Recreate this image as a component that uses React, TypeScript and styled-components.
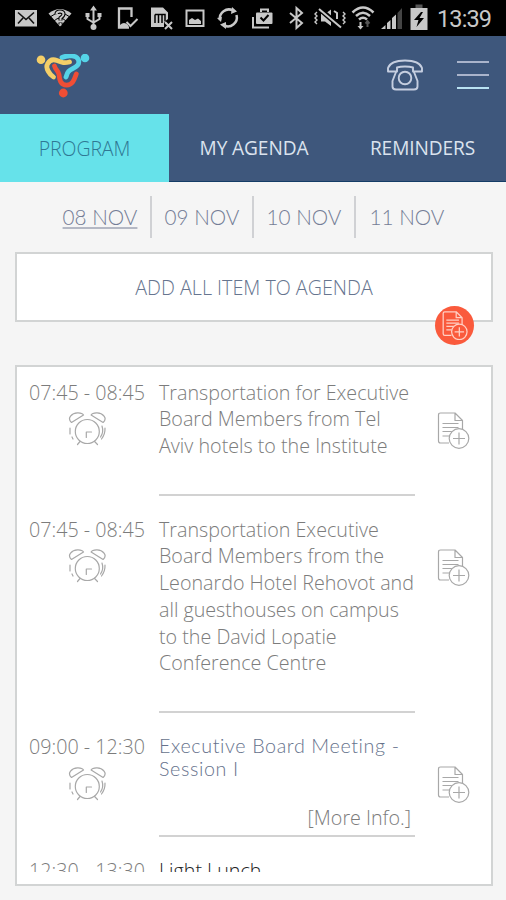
import React from "react";
import styled, { createGlobalStyle } from "styled-components";

const GlobalStyle = createGlobalStyle`
  * { box-sizing: border-box; }
  body { margin: 0; background: #f5f5f5; overflow: hidden; }
  button { font: inherit; border: 0; background: none; padding: 0; margin: 0; }
`;

const Screen = styled.div`
  width: 506px;
  height: 900px;
  overflow: hidden;
  display: flex;
  flex-direction: column;
  background: #f5f5f5;
  font-family: "Open Sans", sans-serif;
  font-weight: 300;
  font-size: 19.7px;
  color: #7c7c7c;
`;

const StatusBar = styled.div`
  flex: none;
  height: 36px;
  background: #000;
`;

const StatusDrawing = styled.svg`
  display: block;
  color: #c8c8c8;
`;

const Header = styled.header`
  flex: none;
  height: 78px;
  padding: 0 17px 0 36px;
  display: flex;
  align-items: center;
  background: #3e577c;
`;

const LogoSlot = styled.div`
  flex: 1;
  height: 46px;
  margin-top: 4px;
`;

const IconButton = styled.button<{ $gap?: number }>`
  display: block;
  line-height: 0;
  margin-left: ${(p) => p.$gap ?? 0}px;
`;

const MenuLines = styled.span`
  display: flex;
  flex-direction: column;
  justify-content: space-between;
  width: 32px;
  height: 28px;
`;

const MenuLine = styled.span<{ $bright?: boolean }>`
  height: 2px;
  background: ${(p) => (p.$bright ? "#b9e2f2" : "#aab4cb")};
`;

const Tabs = styled.nav`
  flex: none;
  height: 68px;
  display: grid;
  grid-template-columns: 169px 169px 168px;
  background: #3e577c;
  border-bottom: 1px solid #143c66;
`;

const Tab = styled.button<{ $active?: boolean }>`
  height: ${(p) => (p.$active ? 68 : 67)}px;
  padding: ${(p) => (p.$active ? "1px 0 0" : "1px 0 0 1px")};
  text-align: center;
  font-size: ${(p) => (p.$active ? 19.5 : 19.1)}px;
  font-weight: ${(p) => (p.$active ? 300 : 400)};
  letter-spacing: -0.1px;
  color: ${(p) => (p.$active ? "#2f7894" : "#dbe3ee")};
  background: ${(p) => (p.$active ? "#66e2ea" : "transparent")};
`;

const Days = styled.div`
  flex: none;
  display: grid;
  grid-template-columns: repeat(4, 102px);
  margin: 14px 0 14px 50px;
  height: 42px;
`;

const Day = styled.button<{ $active?: boolean; $last?: boolean }>`
  font-family: Lato, sans-serif;
  font-weight: 300;
  font-size: 20.7px;
  color: #747d96;
  text-align: center;
  text-decoration: ${(p) => (p.$active ? "underline" : "none")};
  text-decoration-color: #b4b8c4;
  text-underline-offset: 2px;
  text-decoration-thickness: 2px;
  border-right: ${(p) => (p.$last ? "0" : "2px solid #d0d1d4")};
`;

const AddAll = styled.div`
  flex: none;
  position: relative;
  margin: 0 13px 0 15px;
  height: 70px;
  display: flex;
  align-items: center;
  justify-content: center;
  background: #fff;
  border: 2px solid #d2d4d4;
  color: #66758f;
`;

const AddAllLabel = styled.span`
  letter-spacing: 0;
`;

const AddBadge = styled.span`
  position: absolute;
  right: 17px;
  bottom: -25px;
  width: 39px;
  height: 39px;
  border-radius: 50%;
  background: #fa5a3c;
  display: flex;
  align-items: center;
  justify-content: center;
`;

const ListBox = styled.main`
  flex: none;
  margin: 43px 13px 0 15px;
  height: 521px;
  padding: 12.5px 0 12px;
  background: #fff;
  border: 2px solid #d2d4d4;
`;

const List = styled.div`
  height: 492.5px;
  overflow: hidden;
`;

const Row = styled.article`
  display: grid;
  grid-template-columns: 142px 256px 75px;
  padding-bottom: 21px;
`;

const TimeColumn = styled.div`
  display: flex;
  flex-direction: column;
  align-items: center;
  padding-right: 2px;
  line-height: 26.67px;
  white-space: nowrap;
`;

const AlarmSvg = styled.svg`
  margin-top: 6px;
`;

const Body = styled.div`
  border-bottom: 2px solid #d2d2d2;
`;

const Title = styled.h3<{ $session?: boolean; $dark?: boolean }>`
  margin: 0;
  white-space: pre;
  font: inherit;
  font-family: ${(p) => (p.$session ? "Lato" : '"Open Sans"')}, sans-serif;
  font-weight: 300;
  letter-spacing: ${(p) => (p.$session ? 0.62 : 0)}px;
  line-height: ${(p) => (p.$session ? 23 : 26.67)}px;
  color: ${(p) => (p.$dark ? "#222" : p.$session ? "#66728c" : "#7c7c7c")};
  padding-bottom: ${(p) => (p.$session ? 25 : 34.3)}px;
`;

const MoreInfo = styled.div`
  text-align: right;
  padding-right: 4px;
  line-height: 26.67px;
  height: 30px;
`;

const Action = styled.div`
  padding: 32px 0 0 22px;
`;

function Logo() {
  return (
    <svg width="56" height="46" viewBox="0 0 56 46" fill="none" strokeLinecap="round" strokeLinejoin="round">
      <circle cx="5" cy="5.7" r="4.3" fill="#f5cf68" />
      <circle cx="49" cy="4" r="4.3" fill="#55d4e8" />
      <circle cx="27.3" cy="39" r="4.4" fill="#f04e35" />
      <g strokeWidth="4.8">
        <path d="M26 3.5 C33 .5 41 1.500 42.500 6 C44.500 13 36 14 32.500 17.500 C30.500 20 31 21 30 23" stroke="#55d4e8" />
        <path d="M18.500 12 C19.500 16 22 16 23 20.500 C23.500 25 24 31 30.700 31.200 C37 31 38.500 25 40.300 20" stroke="#f04e35" />
        <path d="M17.500 23 C14 21 9 14 11.500 10 C13.500 6 17 5 21 6.500 C26 8.500 28 9.500 33.500 8" stroke="#f5cf68" />
      </g>
    </svg>
  );
}

function Phone() {
  return (
    <svg width="36" height="33" viewBox="0 0 36 33" fill="none" stroke="#c5cee0" strokeWidth="1.9" strokeLinejoin="round" strokeLinecap="round">
      <path d="M1 12.5 V9 C3 3.5 9 1.500 18 1.500 S33 3.500 35 9 V12.500 H26 V8.500 C22 7.200 14 7.200 10 8.500 V12.500 Z" />
      <path d="M9 13 L5.500 22 V27.500 C5.500 29.700 6.500 30.500 9 30.500 H27 C29.500 30.500 30.500 29.700 30.500 27.500 V22 L27 13" />
      <circle cx="18" cy="19" r="6.300" />
    </svg>
  );
}

function Document({ color = "#a8a8a8", width = 33, lineWidth = 1.2, fill = "#fff" }) {
  return (
    <svg width={width} height={(width * 37) / 33} viewBox="0 0 33 37" fill="none" stroke={color} strokeWidth={lineWidth} strokeLinejoin="round">
      <path d="M12 31 H3.5 Q1.5 31 1.5 29 V3 Q1.5 1 3.5 1 H18 L25.5 8.5 V17 M18 1 V8.5 H25.5" />
      <path d="M5.5 11.5 H21.5 M5.5 15.5 H21.5 M5.5 19.5 H15 M5.5 24 H12" />
      <circle cx="22" cy="26.5" r="9.8" fill={fill} />
      <path d="M22 20.5 V32.5 M16 26.5 H28" />
    </svg>
  );
}

function Alarm() {
  return (
    <AlarmSvg width="39" height="35" viewBox="0 0 39 35" fill="none" stroke="#a8a8a8" strokeWidth="1.2" strokeLinecap="round" strokeLinejoin="round">
      <circle cx="19.300" cy="19.500" r="12" />
      <path d="M3.500 10.500 L15.500 3 C14.500 1 12 .7 9.500 .8 C4 1 -1.500 6 3.500 10.500 Z" />
      <path d="M35.100 10.500 L23.100 3 C24.100 1 26.600 .7 29.100 .8 C34.600 1 40.100 6 35.100 10.500 Z" />
      <path d="M12 29.500 L9.500 32.500 M26.600 29.500 L29.500 32.500 M2 16 V22 M4 25 L5 27 M34 14 Q36 20 32.500 25 M37 16 Q37.300 22 33.500 27" />
      <path d="M18.300 25.500 V20 H23.500" />
    </AlarmSvg>
  );
}

function StatusIcons() {
  return (
    <StatusDrawing width="506" height="36" viewBox="0 0 506 36" fill="none" stroke="currentColor" strokeWidth="2">
      <rect x="15" y="10" width="22" height="16.500" fill="currentColor" stroke="none" />
      <path d="M18 12.500 L26 19.500 L34 12.500 M18 23.500 L23 18 M34 23.500 L29 18" stroke="#111" strokeWidth="1.600" />
      <path d="M48.500 13.500 Q60 4.500 71.500 13.500 L60 26.500 Z" fill="currentColor" stroke="none" />
      <path d="M50 17 Q60 9 70 17 M54 21 Q60 15 66 21" stroke="#000" strokeWidth="1" />
      <path d="M56.500 14 Q56.500 11.500 60 11.500 Q63.500 11.500 63.500 14 Q63.500 16 60.500 18 V20.500 M60.500 22.500 V24.500" stroke="#000" strokeWidth="4" />
      <path d="M56.500 14 Q56.500 11.500 60 11.500 Q63.500 11.500 63.500 14 Q63.500 16 60.500 18 V20.500 M60.500 23 V25.500" />
      <path d="M93.500 9 V27 M87.500 15 V19 L93.500 22.500 L99.500 19 V15" />
      <path d="M93.500 5.500 L97 10.500 H90 Z M85.500 13 h4 v4 h-4z M97.500 13 h4 v4 h-4z" fill="currentColor" stroke="none" />
      <circle cx="93.500" cy="27" r="3" fill="currentColor" stroke="none" />
      <path d="M131.500 17 V8.500 H119 V27.500 H129" strokeWidth="2.300" />
      <path d="M120 25 q4 -4 8 0 v3 h-8z" fill="currentColor" stroke="none" />
      <path d="M126.500 22 L130.500 26 L137.500 19" />
      <path d="M151 7.500 H163 L168 12.500 V19 L164 22 V27 H151 Z" fill="currentColor" stroke="none" />
      <path d="M155 14.500 H165 V21 M155 14.500 V23 M158.500 15 V23 M162 15 V23" stroke="#000" strokeWidth="1.500" />
      <path d="M165 22 L172 29 M172 22 L165 29" />
      <rect x="186.500" y="10.500" width="17" height="15.500" />
      <path d="M189 24 V20 L192 18 L195 20 L198 18.500 L201 21 V24 Z" fill="currentColor" stroke="none" />
      <path d="M220 20 A9 9 0 0 1 233 10.500 M236.500 15 A9 9 0 0 1 224 25.500" strokeWidth="2.500" />
      <path d="M232 7 L237 11.500 L231 14 Z M217 18 L222 17 L221 22 Z M226 22 L220 24.500 L226 29Z" fill="currentColor" stroke="none" />
      <path d="M253 17 V27.500 H269" />
      <rect x="256" y="12.500" width="16.500" height="11.500" rx="1" fill="currentColor" stroke="none" />
      <path d="M261 12 V9.500 H268 V12" />
      <path d="M260.500 17.500 L263.500 20.500 L268.500 15" stroke="#000" />
      <path d="M290 13 L302 23 L296.500 28 V8 L302 13 L290 23" />
      <path d="M321 14 H325 L331 9.500 V26 L325 21.500 H321 Z" fill="currentColor" stroke="none" />
      <path d="M319 8.500 L341 27.500" stroke="#000" strokeWidth="5" />
      <path d="M319 9 L341 27.500" />
      <path d="M334 11 L337 13 V19" />
      <path d="M317 12 l-2 2 2 2 -2 2 2 2 -2 2 2 2 M343 12 l2 2 -2 2 2 2 -2 2 2 2 -2 2" strokeWidth="1.400" />
      <path d="M352.500 12.500 Q363 2.500 373.500 12.500 M356 16 Q363 9.500 370 16 M359 19.500 Q363 16 367 19.500" strokeWidth="2.500" />
      <path d="M360.500 22 V27" />
      <path d="M357.500 26 H363.500 L360.500 29.500 Z" fill="currentColor" stroke="none" />
      <path d="M367.500 27 V22 M365.500 23.500 L367.500 21 L369.500 23.500" stroke="#555" />
      <path d="M381 29 L385.500 25 V29 Z M387 29 V23 L390.500 20 V29 Z M392 29 V18 L396 14.500 V29 Z" fill="currentColor" stroke="none" />
      <path d="M397.500 29 V13 L402 8 V29 Z" fill="#444" stroke="none" />
      <path d="M410.500 8 H427.500 V30 H410.500 Z" fill="currentColor" stroke="none" />
      <path d="M415.500 4.500 H422.500 V8 H415.500 Z" fill="#555" stroke="none" />
      <path d="M421 12 L414 20 H418.500 L416.500 27 L424 18 H419.500 L423 12 Z" fill="#000" stroke="none" />
      <text x="437" y="26.500" fontFamily="Roboto, sans-serif" fontSize="23.500" fontWeight="400" fill="#c8c8c8" stroke="none" textLength="55">13:39</text>
    </StatusDrawing>
  );
}

type Item = { time: string; title: string; session?: boolean; dark?: boolean };

const items: Item[] = [
  { time: "07:45 - 08:45", title: "Transportation for Executive\nBoard Members from Tel\nAviv hotels to the Institute" },
  {
    time: "07:45 - 08:45",
    title:
      "Transportation Executive\nBoard Members from the\nLeonardo Hotel Rehovot and\nall guesthouses on campus\nto the David Lopatie\nConference Centre",
  },
  { time: "09:00 - 12:30", title: "Executive Board Meeting -\nSession I", session: true },
  { time: "12:30 - 13:30", title: "Light Lunch", dark: true },
];

const days = ["08 NOV", "09 NOV", "10 NOV", "11 NOV"];

export default function App() {
  return (
    <Screen>
      <GlobalStyle />
      <StatusBar>
        <StatusIcons />
      </StatusBar>
      <Header>
        <LogoSlot>
          <Logo />
        </LogoSlot>
        <IconButton aria-label="Call">
          <Phone />
        </IconButton>
        <IconButton $gap={34} aria-label="Menu">
          <MenuLines>
            <MenuLine />
            <MenuLine />
            <MenuLine $bright />
          </MenuLines>
        </IconButton>
      </Header>
      <Tabs>
        <Tab $active>PROGRAM</Tab>
        <Tab>MY AGENDA</Tab>
        <Tab>REMINDERS</Tab>
      </Tabs>
      <Days>
        {days.map((day, i) => (
          <Day key={day} $active={i === 0} $last={i === days.length - 1}>
            {day}
          </Day>
        ))}
      </Days>
      <AddAll>
        <AddAllLabel>ADD ALL ITEM TO AGENDA</AddAllLabel>
        <AddBadge>
          <Document color="#ffd0c4" width={26} lineWidth={1.6} fill="#fa5a3c" />
        </AddBadge>
      </AddAll>
      <ListBox>
        <List>
          {items.map((item, i) => (
            <Row key={i}>
              <TimeColumn>
                {item.time}
                <Alarm />
              </TimeColumn>
              <Body>
                <Title $session={item.session} $dark={item.dark}>
                  {item.title}
                </Title>
                {item.session && <MoreInfo>[More Info.]</MoreInfo>}
              </Body>
              <Action>
                <Document />
              </Action>
            </Row>
          ))}
        </List>
      </ListBox>
    </Screen>
  );
}
